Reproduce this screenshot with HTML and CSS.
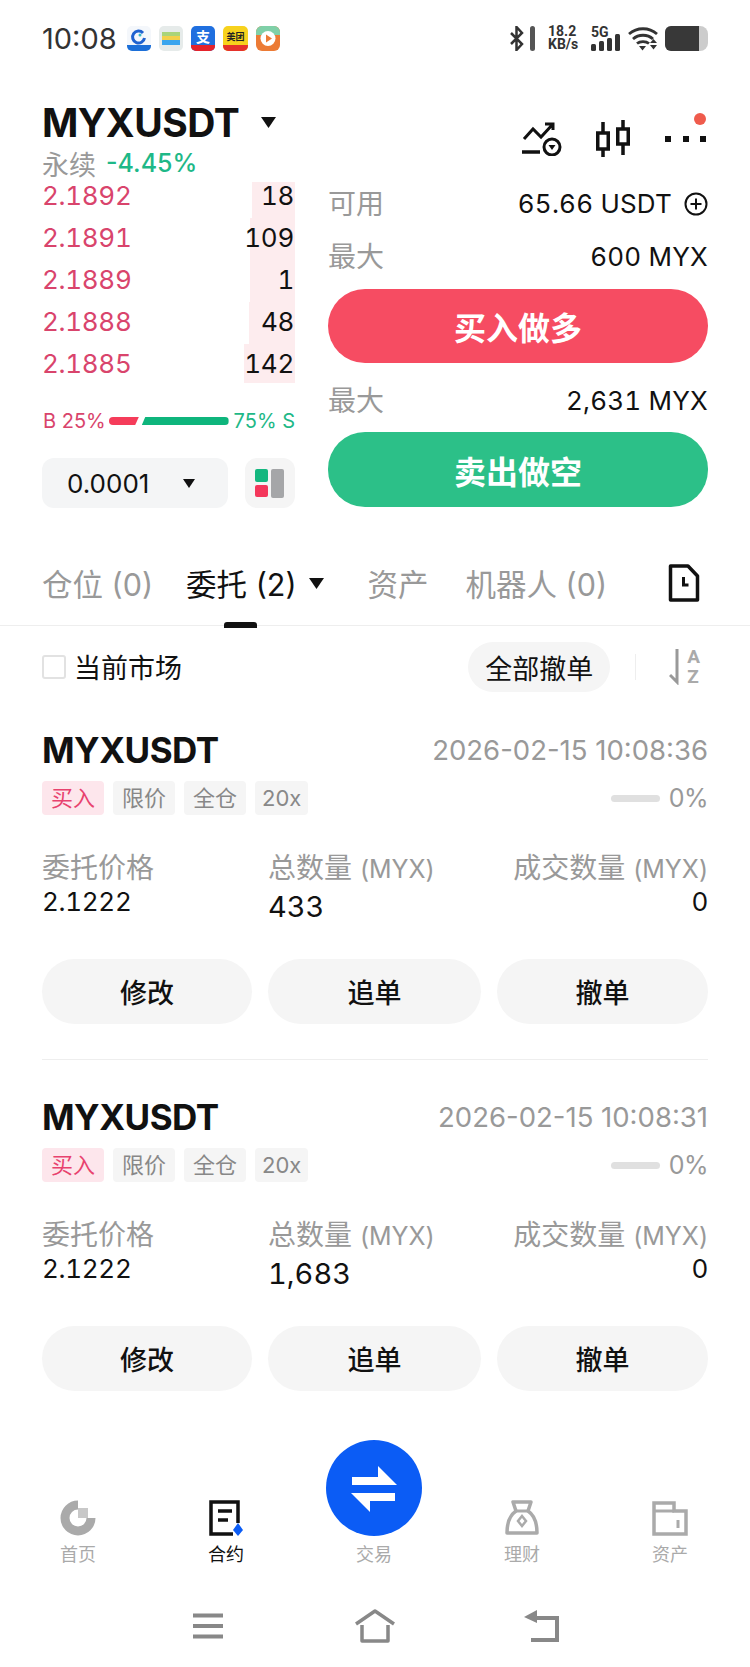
FILE: index.html
```html
<!DOCTYPE html>
<html lang="zh-CN">
<head>
  <meta charset="UTF-8" />
  <meta name="viewport" content="width=device-width, initial-scale=1.0"/>
  <title>MYXUSDT</title>
  <link rel="stylesheet" href="styles.css">
</head>
<body>

<div class="status">
  <span class="time">10:08</span>
  <div class="apps">
    <svg width="24" height="25" viewBox="0 0 24 25"><rect width="24" height="25" rx="5" fill="#f4f7fb"/><path d="M0 19h24v1a5 5 0 0 1-5 5H5a5 5 0 0 1-5-5z" fill="#1c6fd8"/><path d="M16 7a6 6 0 1 0 1.500 5" fill="none" stroke="#1f62d0" stroke-width="3"/><circle cx="13" cy="9" r="1.500" fill="#35b6c9"/></svg>
    <svg width="24" height="25" viewBox="0 0 24 25"><rect width="24" height="25" rx="5" fill="#e6ebea"/><rect x="3" y="6" width="18" height="4" fill="#a9d47a"/><rect x="3" y="10" width="18" height="4" fill="#f2d04b"/><rect x="3" y="14" width="18" height="5" fill="#3aa5ee"/></svg>
    <svg width="24" height="25" viewBox="0 0 24 25"><rect width="24" height="25" rx="5" fill="#1f6fdf"/><path d="M0 19h24v1a5 5 0 0 1-5 5H5a5 5 0 0 1-5-5z" fill="#e5232b"/><text x="12" y="16" class="app-text app-text-white" text-anchor="middle">支</text></svg>
    <svg width="25" height="25" viewBox="0 0 25 25"><rect width="25" height="25" rx="5" fill="#f7d21d"/><path d="M0 19h25v1a5 5 0 0 1-5 5H5a5 5 0 0 1-5-5z" fill="#e5322b"/><text x="12.500" y="14" class="app-text app-text-small" text-anchor="middle">美团</text></svg>
    <svg width="24" height="25" viewBox="0 0 24 25"><rect width="24" height="25" rx="6" fill="#ec7b35"/><path d="M0 6a6 6 0 0 1 6-6h12a6 6 0 0 1 6 6v3H0z" fill="#7fd0a8"/><circle cx="12" cy="12.500" r="7.500" fill="#fff"/><path d="M10 8.500l6 4-6 4z" fill="#ec7b35"/></svg>
  </div>
  <div class="sys-icons">
    <svg width="26" height="25" viewBox="0 0 26 25"><path d="M1 7l11 11-5.500 6V1L12 7 1 18" fill="none" stroke="#333" stroke-width="2.500"/><rect x="20" y="0" width="5" height="25" rx="2.500" fill="#555"/></svg>
    <div class="speed"><span>18.2</span><span>KB/s</span></div>
    <div class="signal">
      <span class="signal-label">5G</span>
      <svg width="29" height="17" viewBox="0 0 29 17"><rect x="0" y="10" width="5" height="7" rx="1.500" fill="#333"/><rect x="8" y="7" width="5" height="10" rx="1.500" fill="#333"/><rect x="16" y="4" width="5" height="13" rx="1.500" fill="#333"/><rect x="24" y="0" width="5" height="17" rx="1.500" fill="#333"/></svg>
    </div>
    <svg width="30" height="25" viewBox="0 0 30 25"><path d="M1 8c8-7 20-7 28 0M5 13c5.500-5 14.500-5 20 0M9 17.500c3-2.500 9-2.500 12 0" fill="none" stroke="#333" stroke-width="2.800"/><path d="M11 20h7l-3.500 4.500zM22 17l3.500-4 3.500 4zM22 19h7l-3.500 4.500z" fill="#333"/></svg>
    <div class="battery"><div class="battery-fill"></div></div>
  </div>
</div>

<div class="head">
  <div class="head-main">
    <div class="pair">
      <span class="pair-name">MYXUSDT</span>
      <svg class="caret-big" width="15" height="11" viewBox="0 0 15 11"><path d="M0 0h15l-7.500 11z" fill="#111"/></svg>
    </div>
    <div class="head-icons">
      <svg class="icon-alert" width="40" height="34" viewBox="0 0 40 34"><path d="M2 17l9-10 8 8L31 2M23 2h8v6" fill="none" stroke="#111" stroke-width="3"/><path d="M0 30h18" stroke="#111" stroke-width="3.500"/><circle cx="30" cy="25" r="8" fill="none" stroke="#111" stroke-width="3"/><path d="M26.500 23h7L30 28z" fill="#111"/></svg>
      <svg width="36" height="38" viewBox="0 0 36 38"><path d="M7 2v35M27 0v35" stroke="#111" stroke-width="3.500"/><rect x="1.750" y="13" width="10.500" height="16" fill="#fff" stroke="#111" stroke-width="3.500"/><rect x="21.750" y="9" width="10.500" height="15" fill="#fff" stroke="#111" stroke-width="3.500"/></svg>
      <div class="more">
        <i></i><i></i><i></i>
        <span class="more-badge"></span>
      </div>
    </div>
  </div>
  <div class="pair-sub">
    <span class="perp">永续</span>
    <span class="change">-4.45%</span>
  </div>
</div>

<div class="trade">
  <div class="book">
    <div class="book-row book-row-first"><span class="depth" style="width: 43px"></span><span class="price">2.1892</span><span class="qty">18</span></div>
    <div class="book-row"><span class="depth" style="width: 45px"></span><span class="price">2.1891</span><span class="qty">109</span></div>
    <div class="book-row"><span class="depth" style="width: 45px"></span><span class="price">2.1889</span><span class="qty">1</span></div>
    <div class="book-row"><span class="depth" style="width: 46px"></span><span class="price">2.1888</span><span class="qty">48</span></div>
    <div class="book-row book-row-last"><span class="depth" style="width: 51px"></span><span class="price">2.1885</span><span class="qty">142</span></div>

    <div class="ratio">
      <span class="ratio-buy">B 25%</span>
      <span class="bar-buy"></span>
      <span class="bar-sell"></span>
      <span class="ratio-sell">75% S</span>
    </div>

    <div class="book-tools">
      <div class="tick">
        <span>0.0001</span>
        <svg width="12" height="9" viewBox="0 0 12 9"><path d="M0 0h12L6 9z" fill="#111"/></svg>
      </div>
      <div class="layout-btn">
        <div class="layout-left"><i class="sq-green"></i><i class="sq-red"></i></div>
        <i class="layout-right"></i>
      </div>
    </div>
  </div>

  <div class="form">
    <div class="form-row">
      <span class="form-label">可用</span>
      <span class="form-value">65.66 USDT
        <svg width="24" height="24" viewBox="0 0 24 24"><circle cx="12" cy="12" r="10.500" fill="none" stroke="#111" stroke-width="2"/><path d="M6.500 12h11M12 6.500v11" stroke="#111" stroke-width="2"/></svg>
      </span>
    </div>
    <div class="form-row">
      <span class="form-label">最大</span>
      <span class="form-value">600 MYX</span>
    </div>
    <button class="action action-buy">买入做多</button>
    <div class="form-row">
      <span class="form-label">最大</span>
      <span class="form-value">2,631 MYX</span>
    </div>
    <button class="action action-sell">卖出做空</button>
  </div>
</div>

<div class="tabs">
  <span class="tab">仓位 (0)</span>
  <span class="tab tab-active">
    <span class="tab-text">委托 (2)</span>
    <svg width="15" height="11" viewBox="0 0 15 11"><path d="M0 0h15l-7.500 11z" fill="#111"/></svg>
  </span>
  <span class="tab tab-assets">资产</span>
  <span class="tab">机器人 (0)</span>
  <svg class="tab-doc" width="32" height="38" viewBox="0 0 32 38"><path d="M2.500 2H20l9.500 10v24H2.500z" fill="none" stroke="#111" stroke-width="3.500" stroke-linejoin="round"/><path d="M15.500 13v8h5" fill="none" stroke="#111" stroke-width="3"/></svg>
</div>

<div class="toolbar">
  <span class="check"></span>
  <span class="check-label">当前市场</span>
  <button class="cancel-all">全部撤单</button>
  <span class="toolbar-line"></span>
  <div class="sort">
    <svg width="12" height="36" viewBox="0 0 12 36"><path d="M8 0v33L1 26" fill="none" stroke="#999" stroke-width="3"/></svg>
    <div class="sort-letters"><span>A</span><span>Z</span></div>
  </div>
</div>

<div class="order order-line">
  <div class="order-top">
    <span class="order-name">MYXUSDT</span>
    <span class="order-time">2026-02-15 10:08:36</span>
  </div>
  <div class="order-tags">
    <span class="tag tag-buy">买入</span>
    <span class="tag">限价</span>
    <span class="tag">全仓</span>
    <span class="tag tag-lev">20x</span>
    <span class="fill-bar"></span>
    <span class="fill-text">0%</span>
  </div>
  <div class="order-grid">
    <span class="col-label">委托价格</span>
    <span class="col-label">总数量 <span class="unit">(MYX)</span></span>
    <span class="col-label col-right">成交数量 <span class="unit">(MYX)</span></span>
    <span class="col-value col-value-price">2.1222</span>
    <span class="col-value">433</span>
    <span class="col-value col-right col-value-price">0</span>
  </div>
  <div class="order-actions">
    <button class="order-btn">修改</button>
    <button class="order-btn">追单</button>
    <button class="order-btn">撤单</button>
  </div>
</div>

<div class="order">
  <div class="order-top">
    <span class="order-name">MYXUSDT</span>
    <span class="order-time">2026-02-15 10:08:31</span>
  </div>
  <div class="order-tags">
    <span class="tag tag-buy">买入</span>
    <span class="tag">限价</span>
    <span class="tag">全仓</span>
    <span class="tag tag-lev">20x</span>
    <span class="fill-bar"></span>
    <span class="fill-text">0%</span>
  </div>
  <div class="order-grid">
    <span class="col-label">委托价格</span>
    <span class="col-label">总数量 <span class="unit">(MYX)</span></span>
    <span class="col-label col-right">成交数量 <span class="unit">(MYX)</span></span>
    <span class="col-value col-value-price">2.1222</span>
    <span class="col-value">1,683</span>
    <span class="col-value col-right col-value-price">0</span>
  </div>
  <div class="order-actions">
    <button class="order-btn">修改</button>
    <button class="order-btn">追单</button>
    <button class="order-btn">撤单</button>
  </div>
</div>

<nav class="nav">
  <div class="nav-item">
    <svg width="36" height="36" viewBox="0 0 36 36"><path d="M18 5a13 13 0 1 0 13 13" fill="none" stroke="#aaa" stroke-width="9"/><rect x="18" y="8" width="10" height="10" fill="#c8c8c8"/></svg>
    <span>首页</span>
  </div>
  <div class="nav-item nav-item-active">
    <svg width="36" height="36" viewBox="0 0 36 36"><path d="M30 23V2H3v32h22" fill="none" stroke="#111" stroke-width="3.500"/><path d="M10 11h14M10 20h10" stroke="#111" stroke-width="3.500"/><path d="M30 23l5 7-5 6-5-6z" fill="#0b5cf5"/></svg>
    <span>合约</span>
  </div>
  <div class="nav-item">
    <div class="fab">
      <svg width="96" height="96" viewBox="0 0 96 96"><path d="M26 37h26V26l19 19H26zM25 53h44v8H44v11z" fill="#fff"/></svg>
    </div>
    <span>交易</span>
  </div>
  <div class="nav-item">
    <svg width="36" height="36" viewBox="0 0 36 36"><path d="M9 2h18l-3 9c6 4 9 10 9 22H3c0-12 3-18 9-22z" fill="none" stroke="#aaa" stroke-width="3.500" stroke-linejoin="round"/><path d="M12 11h12" stroke="#aaa" stroke-width="3"/><path d="M18 16l4 5-4 5-4-5z" fill="none" stroke="#aaa" stroke-width="2.500"/></svg>
    <span>理财</span>
  </div>
  <div class="nav-item">
    <svg width="36" height="36" viewBox="0 0 36 36"><path d="M2 34V3h20v8h12v23z" fill="none" stroke="#aaa" stroke-width="3.500"/><path d="M2 11h20" stroke="#aaa" stroke-width="3"/><path d="M26 20v8" stroke="#aaa" stroke-width="3"/></svg>
    <span>资产</span>
  </div>
</nav>

<div class="sysbar">
  <svg width="32" height="26" viewBox="0 0 32 26"><path d="M1 2.500h30M1 13h30M1 23.500h30" stroke="#888" stroke-width="4"/></svg>
  <svg width="42" height="34" viewBox="0 0 42 34"><path d="M2 15L21 2l19 13M8 16v16h26V16" fill="none" stroke="#888" stroke-width="3.500" stroke-linejoin="round"/></svg>
  <svg class="sys-back" width="36" height="32" viewBox="0 0 36 32"><path d="M8 8h26v22H8" fill="none" stroke="#888" stroke-width="4"/><path d="M14 0v13L1 7z" fill="#888"/></svg>
</div>

</body>
</html>
```

FILE: styles.css
```css
* {
  box-sizing: border-box;
}
body {
  margin: 0;
  width: 750px;
  height: 1667px;
  overflow: hidden;
  background: #fff;
  color: #111;
  font-family: Inter, 'Noto Sans CJK SC', sans-serif;
}
button {
  border: none;
  font-family: inherit;
  padding: 0;
}
svg {
  display: block;
  flex-shrink: 0;
}

/* status bar */
.status {
  height: 76px;
  padding: 0 42px;
  display: flex;
  align-items: center;
}
.time {
  font-size: 29px;
  color: #333;
  width: 85px;
}
.apps {
  display: flex;
  gap: 8px;
}
.app-text {
  font-size: 14px;
  font-weight: 700;
  fill: #222;
}
.app-text-white {
  fill: #fff;
}
.app-text-small {
  font-size: 9px;
}
.sys-icons {
  margin-left: auto;
  display: flex;
  align-items: center;
  gap: 7px;
}
.speed {
  display: flex;
  flex-direction: column;
  width: 34px;
  margin-left: 5px;
  font-family: Roboto, sans-serif;
  font-size: 14px;
  font-weight: 700;
  line-height: 13px;
  color: #333;
}
.signal {
  position: relative;
  width: 30px;
  height: 25px;
  margin-left: 2px;
  display: flex;
  align-items: flex-end;
}
.signal-label {
  position: absolute;
  left: 0;
  top: -2px;
  font-family: Roboto, sans-serif;
  font-size: 14px;
  font-weight: 700;
  color: #333;
}
.battery {
  width: 43px;
  height: 25px;
  border-radius: 6px 8px 8px 6px;
  background: #ccc;
  overflow: hidden;
}
.battery-fill {
  width: 34px;
  height: 25px;
  background: #383838;
}

/* pair header */
.head {
  height: 100px;
  padding: 20px 42px 0;
}
.head-main {
  height: 52px;
  display: flex;
  align-items: center;
  justify-content: space-between;
}
.pair {
  display: flex;
  align-items: center;
  gap: 22px;
}
.pair-name {
  font-size: 39px;
  font-weight: 700;
  letter-spacing: -0.5px;
}
.head-icons {
  align-self: flex-start;
  display: flex;
  align-items: flex-start;
  gap: 34px;
  padding-top: 24px;
  margin-right: 2px;
}
.icon-alert {
  margin-top: 2px;
}
.more {
  position: relative;
  width: 41px;
  margin-left: -1px;
  display: flex;
  justify-content: space-between;
  margin-top: 16px;
}
.more i {
  width: 6px;
  height: 6px;
  background: #111;
}
.more-badge {
  position: absolute;
  right: 0;
  top: -23px;
  width: 12px;
  height: 12px;
  border-radius: 50%;
  background: #ef5b4c;
}
.pair-sub {
  display: flex;
  align-items: center;
  gap: 10px;
  height: 30px;
}
.perp {
  font-size: 27px;
  color: #999;
}
.change {
  font-size: 25px;
  font-weight: 500;
  color: #1eb887;
}

/* order book and form */
.trade {
  display: flex;
  gap: 33px;
  padding: 0 42px;
}
.book {
  width: 253px;
}
.book-row {
  position: relative;
  height: 42px;
  padding-bottom: 4px;
  display: flex;
  align-items: center;
  justify-content: space-between;
  font-size: 26px;
  font-variant-numeric: tabular-nums;
  letter-spacing: -0.3px;
}
.depth {
  position: absolute;
  right: 0;
  top: 0;
  bottom: 0;
  background: #fdecee;
}
.book-row-first .depth {
  top: 6px;
}
.book-row-last .depth {
  bottom: 3px;
}
.price {
  position: relative;
  color: #d9446c;
}
.qty {
  position: relative;
  color: #111;
  padding-right: 1px;
}
.ratio {
  margin-top: 22px;
  height: 26px;
  display: flex;
  align-items: center;
  font-size: 20px;
}
.ratio-buy {
  color: #d9446c;
  width: 67px;
  padding-left: 1px;
}
.ratio-sell {
  color: #1eb887;
  margin-left: 5px;
  white-space: nowrap;
}
.bar-buy {
  width: 30px;
  height: 8px;
  background: #f53c5a;
  border-radius: 4px 0 0 4px;
  clip-path: polygon(0 0, 100% 0, 88% 100%, 0 100%);
}
.bar-sell {
  width: 87px;
  height: 8px;
  margin-left: 3px;
  background: #0eb57c;
  border-radius: 0 4px 4px 0;
  clip-path: polygon(4% 0, 100% 0, 100% 100%, 0 100%);
}
.book-tools {
  margin-top: 24px;
  display: flex;
  justify-content: space-between;
}
.tick {
  width: 186px;
  height: 50px;
  border-radius: 12px;
  background: #f4f5f6;
  padding: 0 33px 0 25px;
  display: flex;
  align-items: center;
  justify-content: space-between;
  font-size: 26px;
}
.layout-btn {
  width: 50px;
  height: 50px;
  border-radius: 12px;
  background: #f5f5f5;
  padding: 11px 10px;
  display: flex;
  gap: 3px;
}
.layout-left {
  display: flex;
  flex-direction: column;
  gap: 3px;
}
.sq-green,
.sq-red {
  width: 13px;
  height: 13px;
  border-radius: 2px;
}
.sq-green {
  background: #14b77f;
}
.sq-red {
  background: #f4375b;
}
.layout-right {
  width: 13px;
  height: 29px;
  border-radius: 2px;
  background: #a5a6a8;
}
.form {
  width: 380px;
}
.form-row {
  height: 53px;
  display: flex;
  align-items: center;
  justify-content: space-between;
}
.form-label {
  font-size: 28px;
  padding-bottom: 2px;
  color: #999;
}
.form-value {
  display: flex;
  align-items: center;
  gap: 12px;
  padding-top: 2px;
  font-size: 26px;
  font-variant-numeric: tabular-nums;
  letter-spacing: 0.2px;
  color: #111;
}
.action {
  display: block;
  width: 100%;
  height: 74px;
  border-radius: 37px;
  color: #fff;
  font-size: 32px;
  font-weight: 700;
}
.action-buy {
  margin: 7px 0 10px;
  background: #f64c62;
}
.action-sell {
  height: 75px;
  margin-top: 6px;
  background: #2cc088;
}

/* tabs */
.tabs {
  margin-top: 33px;
  height: 85px;
  padding: 0 50px 0 42px;
  border-bottom: 1px solid #eee;
  display: flex;
  gap: 33px;
  align-items: center;
}
.tab {
  font-size: 30.500px;
  color: #999;
  white-space: nowrap;
}
.tab-active {
  position: relative;
  color: #111;
  display: flex;
  align-items: center;
  gap: 12px;
}
.tab-active::after {
  content: "";
  position: absolute;
  left: 38px;
  bottom: -23px;
  width: 33px;
  height: 6px;
  border-radius: 3px 3px 0 0;
  background: #111;
}
.tab-assets {
  margin: 0 4px 0 11px;
}
.tab-doc {
  margin-left: auto;
}

/* filter row */
.toolbar {
  height: 82px;
  padding: 0 50px 0 42px;
  display: flex;
  align-items: center;
}
.check {
  width: 24px;
  height: 24px;
  border: 2px solid #e2e2e2;
  border-radius: 3px;
}
.check-label {
  margin-left: 8px;
  padding-bottom: 2px;
  font-size: 27px;
}
.cancel-all {
  margin-left: auto;
  width: 142px;
  height: 50px;
  border-radius: 25px;
  background: #f5f5f5;
  font-size: 27px;
  color: #111;
}
.toolbar-line {
  width: 1px;
  height: 26px;
  margin: 0 33px 0 25px;
  background: #eee;
}
.sort {
  display: flex;
  gap: 6px;
  align-items: center;
}
.sort-letters {
  display: flex;
  flex-direction: column;
  font-family: Roboto, sans-serif;
  font-size: 19px;
  font-weight: 700;
  line-height: 20px;
  color: #aaa;
}

/* order cards */
.order {
  padding: 25px 42px 0;
}
.order-line::after {
  content: "";
  display: block;
  margin-top: 35px;
  height: 1px;
  background: #eee;
}
.order-line {
  margin-bottom: 15px;
}
.order-top {
  height: 34px;
  display: flex;
  align-items: center;
  justify-content: space-between;
}
.order-name {
  font-size: 35px;
  font-weight: 700;
  letter-spacing: -0.5px;
}
.order-time {
  font-size: 27.500px;
  color: #999;
}
.order-tags {
  margin-top: 14px;
  height: 34px;
  display: flex;
  align-items: center;
  gap: 9px;
}
.tag {
  height: 34px;
  padding: 0 9px;
  border-radius: 4px;
  background: #f5f5f5;
  color: #888;
  font-size: 22px;
  line-height: 34px;
  text-align: center;
}
.tag-buy {
  background: #fde6ec;
  color: #e8426e;
}
.tag-lev {
  padding: 0 7px;
}
.fill-bar {
  width: 49px;
  height: 7px;
  border-radius: 4px;
  background: #e0e0e0;
  margin-left: auto;
}
.fill-text {
  font-size: 25px;
  letter-spacing: -0.5px;
  color: #999;
}
.order-grid {
  margin-top: 31px;
  display: grid;
  grid-template-columns: 210px 213px 211px;
  column-gap: 16px;
  grid-template-rows: 40px 36px;
}
.col-label {
  font-size: 28px;
  color: #999;
  white-space: nowrap;
}
.unit {
  font-size: 25px;
}
.col-value {
  font-size: 29px;
  font-variant-numeric: tabular-nums;
  color: #111;
  padding-top: 3px;
}
.col-value-price {
  font-size: 26px;
  letter-spacing: -0.3px;
  padding-top: 0;
}
.col-right {
  text-align: right;
}
.order-actions {
  margin-top: 37px;
  display: grid;
  grid-template-columns: 210px 213px 211px;
  column-gap: 16px;
}
.order-btn {
  height: 65px;
  border-radius: 33px;
  background: #f5f5f5;
  color: #111;
  font-size: 27px;
  font-weight: 500;
}

/* bottom nav */
.nav {
  margin-top: 49px;
  padding: 0 6px 0 4px;
  display: grid;
  grid-template-columns: repeat(5, 1fr);
  align-items: end;
}
.nav-item {
  display: flex;
  flex-direction: column;
  align-items: center;
  gap: 6px;
  font-size: 18px;
  line-height: 26px;
  color: #aaa;
}
.nav-item-active {
  color: #111;
}
.fab {
  width: 96px;
  height: 96px;
  border-radius: 50%;
  background: #0b5cf5;
}
.sysbar {
  margin: 14px auto 0;
  width: 501px;
  height: 87px;
  display: grid;
  grid-template-columns: repeat(3, 1fr);
  align-items: center;
  justify-items: center;
}
.sys-back {
  margin-right: 3px;
}
```
